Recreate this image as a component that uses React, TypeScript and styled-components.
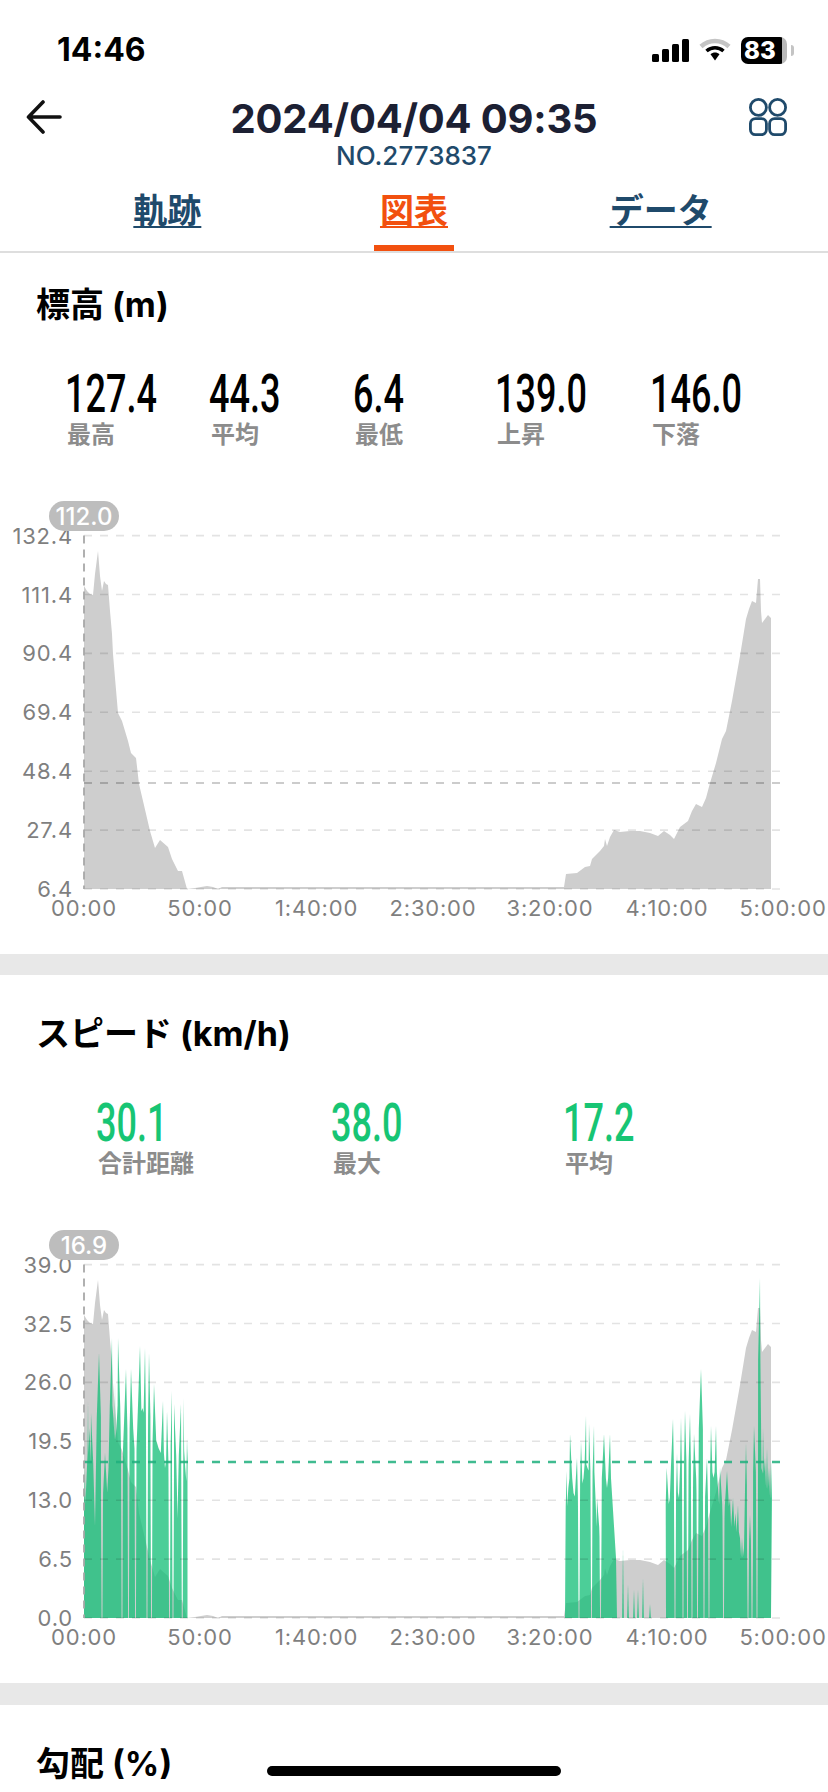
import styled, { createGlobalStyle } from "styled-components";

type Pt = [number, number];
type Tooth = [number, number, number];

const SANS = `Inter, "Noto Sans CJK JP", sans-serif`;
const CJK = `Inter, "Noto Sans CJK JP", "Noto Sans", sans-serif`;

const PLOT_LEFT = 84;
const PLOT_RIGHT = 780;
const BASELINE = 390;
const ROW_GAP = 58.9;

const xLabels = [
  ["00:00", 84],
  ["50:00", 200],
  ["1:40:00", 316.6],
  ["2:30:00", 433],
  ["3:20:00", 550],
  ["4:10:00", 667],
  ["5:00:00", 783],
] as const;

// [x on the page, height above the baseline]
const profile: Pt[] = [
  [84, 0], [84, 303], [87, 298], [90, 295], [93, 294], [95, 315], [98, 338], [100, 313], [102, 298],
  [104, 308], [106, 305], [108, 304], [110, 278], [112, 255], [113, 235], [115, 211], [118, 176],
  [122, 168], [125, 158], [128, 148], [131, 136], [136, 131], [139, 105], [143, 88], [150, 58],
  [155, 41], [160, 49], [168, 42], [172, 30], [178, 18], [182, 18], [187, 0], [195, 1], [207, 3],
  [213, 2], [218, 0], [222, 2], [564, 2], [566, 15], [577, 16], [585, 22], [590, 23], [592, 30],
  [600, 38], [604, 43], [605, 50], [607, 43], [610, 52], [614, 59], [620, 57], [630, 58], [640, 58],
  [650, 56], [658, 53], [664, 58], [670, 54], [674, 50], [680, 62], [688, 68], [692, 78], [696, 85],
  [702, 82], [706, 91], [710, 106], [716, 126], [722, 150], [726, 158], [732, 188], [740, 233],
  [746, 270], [749, 280], [752, 288], [756, 286], [757, 298], [758, 310], [760, 310], [761, 278],
  [762, 266], [768, 274], [771, 271], [771, 0],
];

// peak x, peak height, height of the valley after it (0 is a thin gap down to the baseline)
const buildTeeth = (teeth: Tooth[], start: Pt[], end: Pt[]): Pt[] => {
  const pts: Pt[] = [...start];
  teeth.forEach(([x, h, valley], i) => {
    const prev = teeth[i - 1];
    const next = teeth[i + 1];
    const left = prev ? Math.min(2.2, (x - prev[0]) / 2 - 1.1) : 1;
    const right = next ? Math.min(2.2, (next[0] - x) / 2 - 1.1) : 1;
    if (left > 0.3) pts.push([x - left, h * 0.76]);
    pts.push([x, h]);
    if (right > 0.3) pts.push([x + right, h * 0.76]);
    if (!next) return;
    const mid = (x + next[0]) / 2;
    if (valley === 0) {
      const shoulder = Math.min(h, next[1]) * 0.68;
      pts.push([mid - 1, shoulder], [mid - 0.45, 0], [mid + 0.45, 0], [mid + 1, shoulder]);
    } else {
      pts.push([mid, valley]);
    }
  });
  return [...pts, ...end];
};

const spike = (x: number, h: number): Pt[] => [[x - 0.9, 0], [x, h], [x + 0.9, 0]];

const speedBursts: Pt[][] = [
  buildTeeth(
    [
      [85, 150, 140], [88, 217, 190], [91, 205, 92], [99, 265, 0], [105, 165, 150], [112, 280, 200],
      [115, 235, 190], [118, 280, 0], [126, 249, 0], [131, 249, 0], [140, 272, 210], [145, 270, 0],
      [149, 265, 0], [154, 234, 170], [163, 217, 150], [167, 207, 0], [172, 227, 0], [174, 214, 100],
      [181, 214, 0], [183.5, 220, 150], [187, 180, 150],
    ],
    [[84, 0]],
    [[187.5, 170], [187.5, 0]],
  ),
  buildTeeth(
    [
      [566.7, 147, 130], [570, 184, 125], [577, 160, 0], [581, 177, 140], [586, 202, 150], [589, 194, 0],
      [594, 192, 120], [597, 120, 0], [604, 184, 130], [610, 184, 100],
    ],
    [[565, 0]],
    [[616, 60], [617, 0]],
  ),
  spike(623, 70),
  spike(628, 34),
  spike(634, 28),
  spike(638, 28),
  spike(643, 40),
  spike(650, 14),
  buildTeeth(
    [
      [666.7, 150, 120], [673, 199, 0], [677, 165, 120], [681, 200, 0], [685, 207, 0], [690, 204, 0],
      [694, 184, 0], [701, 249, 0], [707, 160, 0], [711, 192, 140], [716, 192, 130], [720, 150, 0],
      [727, 147, 120], [733, 120, 105], [738, 113, 80], [742, 80, 70], [746, 175, 0], [750, 103, 0],
      [754, 192, 0], [760, 340, 150], [763, 190, 160], [767, 170, 150], [771, 157, 150],
    ],
    [[666, 0]],
    [[771, 0]],
  ),
];

const toPath = (pts: Pt[]) =>
  "M" + pts.map(([x, h]) => `${x} ${BASELINE - h}`).join("L") + "Z";

const GlobalStyle = createGlobalStyle`
  html, body {
    margin: 0;
    padding: 0;
    background: #fff;
  }
`;

const Page = styled.div`
  position: relative;
  width: 828px;
  height: 1792px;
  overflow: hidden;
  background: #fff;
  font-family: ${SANS};
`;

const StatusBar = styled.div`
  height: 84px;
  padding: 16px 41px 0 57px;
  box-sizing: border-box;
  display: flex;
  align-items: center;
  justify-content: space-between;
`;

const Clock = styled.div`
  font-size: 32px;
  font-weight: 700;
  color: #000;
  line-height: 1;
`;

const StatusIcons = styled.div`
  display: flex;
  align-items: center;
  gap: 10px;
`;

const Battery = styled.div`
  position: relative;
  width: 46px;
  height: 27px;
  border-radius: 7px;
  background: linear-gradient(90deg, #000 89%, #b9b9b9 89%);
  color: #fff;
  font-size: 24px;
  font-weight: 800;
  line-height: 27px;
  padding-left: 3px;
  box-sizing: border-box;

  &::after {
    content: "";
    position: absolute;
    right: -7px;
    top: 8px;
    width: 3px;
    height: 11px;
    border-radius: 0 3px 3px 0;
    background: #c4c4c4;
  }
`;

const Header = styled.header`
  height: 86px;
  padding: 0 26px;
  display: grid;
  grid-template-columns: 53px 1fr 53px;
  align-items: start;
`;

const HeaderIcon = styled.div<{ $top: number }>`
  margin-top: ${({ $top }) => $top}px;
  line-height: 0;
`;

const TitleBlock = styled.div`
  margin-top: 12px;
  display: flex;
  flex-direction: column;
  align-items: center;
`;

const Title = styled.h1`
  margin: 0;
  font-size: 40px;
  line-height: 46px;
  font-weight: 700;
  letter-spacing: -0.2px;
  color: #1c2033;
  white-space: nowrap;
`;

const SubTitle = styled.div`
  font-size: 26px;
  line-height: 28px;
  font-weight: 500;
  color: #1f4a6b;
`;

const Tabs = styled.nav`
  height: 81px;
  padding: 0 44px;
  display: grid;
  grid-template-columns: repeat(3, 1fr);
  border-bottom: 2px solid #dedede;
`;

const Tab = styled.div<{ $active?: boolean }>`
  display: flex;
  flex-direction: column;
  align-items: center;
  justify-content: space-between;
  padding-top: 20px;
  font-family: ${CJK};
  font-size: 34px;
  line-height: 42px;
  font-weight: 700;
  color: ${({ $active }) => ($active ? "#f2500f" : "#1f4a6b")};
  text-decoration: underline;
  text-underline-offset: 3px;
  text-decoration-thickness: 2px;
`;

const TabMark = styled.div`
  width: 80px;
  height: 6px;
  background: #f2500f;
`;

const Section = styled.section`
  padding: 41px 0 0;

  &:first-of-type {
    padding-top: 34px;
  }
`;

const SectionTitle = styled.h2`
  margin: 0;
  padding-left: 36px;
  font-family: ${CJK};
  font-size: 34px;
  line-height: 36px;
  font-weight: 700;
  color: #000;
`;

const Stats = styled.div<{ $left: number }>`
  display: flex;
  margin-top: 47px;
  padding-left: ${({ $left }) => $left}px;
`;

const Stat = styled.div<{ $width: number }>`
  width: ${({ $width }) => $width}px;
`;

const StatValue = styled.div<{ $color: string }>`
  font-family: Roboto, sans-serif;
  font-size: 53px;
  line-height: 48px;
  font-weight: 500;
  margin-left: -2px;
  color: ${({ $color }) => $color};
  transform: scaleX(0.68);
  transform-origin: left center;
  white-space: nowrap;
`;

const StatLabel = styled.div`
  margin-top: 3px;
  font-family: ${CJK};
  font-size: 24px;
  line-height: 28px;
  font-weight: 700;
  color: #8c8c8c;
`;

const ChartSvg = styled.svg`
  display: block;
  margin-top: 50px;
`;

const ChartFoot = styled.div`
  height: 25px;
`;

const Band = styled.div<{ $height: number }>`
  height: ${({ $height }) => $height}px;
  background: #e8e8e8;
`;

const AxisText = styled.text`
  font-family: ${SANS};
  font-size: 22px;
  letter-spacing: 0.8px;
  fill: #7f7f7f;
`;

const BubbleText = styled.text`
  font-family: ${SANS};
  font-size: 24px;
  font-weight: 500;
  fill: #fff;
`;

const HomeBar = styled.div`
  position: absolute;
  left: 267px;
  top: 1766px;
  width: 294px;
  height: 10px;
  border-radius: 5px;
  background: #000;
`;

function SignalIcon() {
  return (
    <svg width="37" height="23" viewBox="0 0 37 23">
      <rect x="0" y="15" width="7" height="8" rx="1.5" fill="#000" />
      <rect x="10" y="10" width="7" height="13" rx="1.5" fill="#000" />
      <rect x="20" y="5" width="7" height="18" rx="1.5" fill="#000" />
      <rect x="30" y="0" width="7" height="23" rx="1.5" fill="#000" />
    </svg>
  );
}

function WifiIcon() {
  return (
    <svg width="32" height="24" viewBox="0 0 32 24">
      <path d="M2 8.5C10 1 22 1 30 8.5" fill="none" stroke="#c4c4c4" strokeWidth="4.5" />
      <path d="M7.5 13C12.5 8.7 19.5 8.7 24.5 13" fill="none" stroke="#000" strokeWidth="3.6" />
      <path d="M11.5 16.2L16 22.5L20.5 16.2C18 14 14 14 11.5 16.2Z" fill="#000" />
    </svg>
  );
}

function BackIcon() {
  return (
    <svg width="36" height="34" viewBox="0 0 36 34">
      <path
        d="M34 17H3M17 2L2.5 17L17 32"
        fill="none"
        stroke="#111"
        strokeWidth="3.6"
        strokeLinecap="round"
        strokeLinejoin="round"
      />
    </svg>
  );
}

function GridIcon() {
  return (
    <svg width="38" height="38" viewBox="0 0 38 38">
      <g fill="none" stroke="#1f4a6b" strokeWidth="2.8">
        <circle cx="9.4" cy="9.4" r="8" />
        <circle cx="28.6" cy="9.4" r="8" />
        <rect x="1.4" y="20.6" width="16" height="16" rx="5" />
        <rect x="20.6" y="20.6" width="16" height="16" rx="5" />
      </g>
    </svg>
  );
}

interface ChartProps {
  yLabels: string[];
  bubble: string;
  avgHeight: number;
  avgColor: string;
  avgWidth: number;
  bursts?: Pt[][];
}

function Chart({ yLabels, bubble, avgHeight, avgColor, avgWidth, bursts = [] }: ChartProps) {
  return (
    <ChartSvg width="828" height="430" viewBox="0 0 828 430">
      <path d={toPath(profile)} fill="#cecece" />
      {bursts.map((pts, i) => (
        <path key={i} d={toPath(pts)} fill="rgba(20,190,120,0.76)" />
      ))}
      {yLabels.map((label, i) => {
        const y = BASELINE - ROW_GAP * i;
        return (
          <g key={label}>
            <line
              x1={PLOT_LEFT}
              x2={PLOT_RIGHT}
              y1={y}
              y2={y}
              stroke="rgba(0,0,0,0.11)"
              strokeWidth="1.6"
              strokeDasharray="8 8"
            />
            <AxisText x="73" y={y + 8} textAnchor="end">
              {label}
            </AxisText>
          </g>
        );
      })}
      <line
        x1={PLOT_LEFT}
        x2={PLOT_RIGHT}
        y1={BASELINE - avgHeight}
        y2={BASELINE - avgHeight}
        stroke={avgColor}
        strokeWidth={avgWidth}
        strokeDasharray="8 8"
      />
      <line
        x1={PLOT_LEFT}
        x2={PLOT_LEFT}
        y1={BASELINE - ROW_GAP * 6}
        y2={BASELINE}
        stroke="#a8a8a8"
        strokeWidth="1.8"
        strokeDasharray="8 6"
      />
      <rect x="49" y="2" width="70" height="30" rx="15" fill="#bdbdbd" />
      <BubbleText x="84" y="26" textAnchor="middle">
        {bubble}
      </BubbleText>
      {xLabels.map(([label, x]) => (
        <AxisText key={label} x={x} y={BASELINE + 27} textAnchor="middle">
          {label}
        </AxisText>
      ))}
    </ChartSvg>
  );
}

const elevationStats = [
  { value: "127.4", label: "最高", width: 144 },
  { value: "44.3", label: "平均", width: 144 },
  { value: "6.4", label: "最低", width: 142 },
  { value: "139.0", label: "上昇", width: 155 },
  { value: "146.0", label: "下落", width: 120 },
];

const speedStats = [
  { value: "30.1", label: "合計距離", width: 235 },
  { value: "38.0", label: "最大", width: 232 },
  { value: "17.2", label: "平均", width: 120 },
];

export default function App() {
  return (
    <Page>
      <GlobalStyle />
      <StatusBar>
        <Clock>14:46</Clock>
        <StatusIcons>
          <SignalIcon />
          <WifiIcon />
          <Battery>83</Battery>
        </StatusIcons>
      </StatusBar>
      <Header>
        <HeaderIcon $top={16}>
          <BackIcon />
        </HeaderIcon>
        <TitleBlock>
          <Title>2024/04/04 09:35</Title>
          <SubTitle>NO.2773837</SubTitle>
        </TitleBlock>
        <HeaderIcon $top={14}>
          <GridIcon />
        </HeaderIcon>
      </Header>
      <Tabs>
        <Tab>軌跡</Tab>
        <Tab $active>
          図表
          <TabMark />
        </Tab>
        <Tab>データ</Tab>
      </Tabs>

      <Section>
        <SectionTitle>標高 (m)</SectionTitle>
        <Stats $left={67}>
          {elevationStats.map((s) => (
            <Stat key={s.label} $width={s.width}>
              <StatValue $color="#000">{s.value}</StatValue>
              <StatLabel>{s.label}</StatLabel>
            </Stat>
          ))}
        </Stats>
        <Chart
          yLabels={["6.4", "27.4", "48.4", "69.4", "90.4", "111.4", "132.4"]}
          bubble="112.0"
          avgHeight={106}
          avgColor="rgba(0,0,0,0.2)"
          avgWidth={1.8}
        />
        <ChartFoot />
      </Section>
      <Band $height={21} />

      <Section>
        <SectionTitle>スピード (km/h)</SectionTitle>
        <Stats $left={98}>
          {speedStats.map((s) => (
            <Stat key={s.label} $width={s.width}>
              <StatValue $color="#17c574">{s.value}</StatValue>
              <StatLabel>{s.label}</StatLabel>
            </Stat>
          ))}
        </Stats>
        <Chart
          yLabels={["0.0", "6.5", "13.0", "19.5", "26.0", "32.5", "39.0"]}
          bubble="16.9"
          avgHeight={156}
          avgColor="rgba(30,175,125,0.85)"
          avgWidth={2.6}
          bursts={speedBursts}
        />
        <ChartFoot />
      </Section>
      <Band $height={22} />

      <Section>
        <SectionTitle>勾配 (%)</SectionTitle>
      </Section>
      <HomeBar />
    </Page>
  );
}
